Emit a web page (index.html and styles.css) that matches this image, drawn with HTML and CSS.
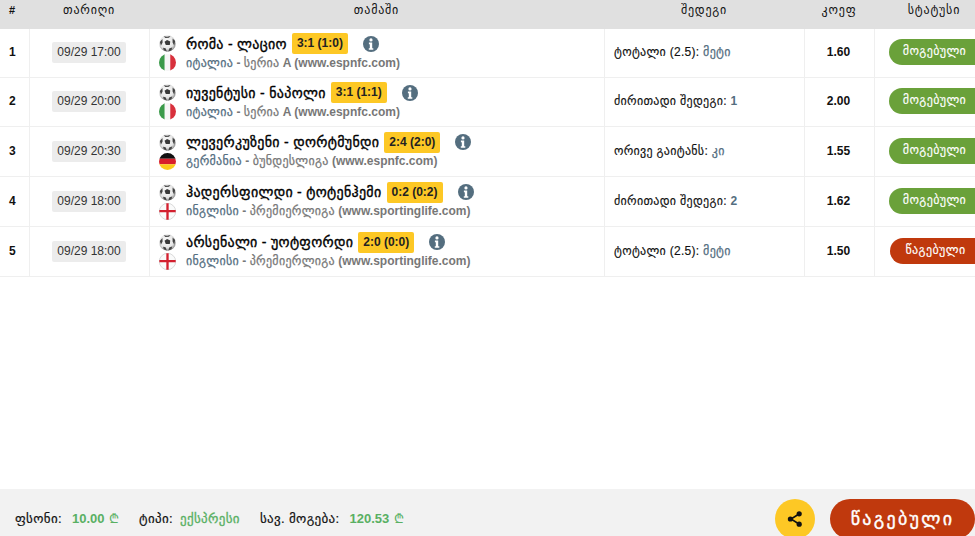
FILE: index.html
```html
<!DOCTYPE html>
<html lang="ka">
<head>
<meta charset="utf-8">
<title>კუპონი</title>
<link rel="stylesheet" href="styles.css">
</head>
<body>
<svg class="defs" width="0" height="0" aria-hidden="true">
  <defs>
    <radialGradient id="ball-shade" cx=".45" cy=".4" r=".6">
      <stop offset="0" stop-color="#fff"/><stop offset=".7" stop-color="#e4e4e4"/><stop offset="1" stop-color="#8c8c8c"/>
    </radialGradient>
    <symbol id="ball" viewBox="0 0 16 16">
      <circle cx="8" cy="8" r="7.8" fill="url(#ball-shade)"/>
      <path d="M7.6 4.6 10.6 6 10.2 9.4H6.4L5.2 6.4Z" fill="#3a3a3a"/>
      <path d="M4.4 1.2 7.6 1.6 10.8 1 9.4 2.6 6 2.8ZM.8 6.6 3.2 3.8 3.4 7 1.8 10.2ZM15.2 5.6 12.8 3.4 12.8 7 14.4 10.2ZM3.8 12 6.2 12.4 7.4 15.6 4.4 14.4ZM12.4 11.8 9.8 12.4 8.8 15.6 11.8 14.4Z" fill="#444"/>
    </symbol>
    <symbol id="flag-it" viewBox="0 0 16 16">
      <clipPath id="c-it"><circle cx="8" cy="8" r="8"/></clipPath>
      <g clip-path="url(#c-it)">
        <rect width="5.4" height="16" fill="#3b9a4a"/>
        <rect x="5.4" width="5.2" height="16" fill="#f6f6f6"/>
        <rect x="10.6" width="5.4" height="16" fill="#d8303c"/>
      </g>
    </symbol>
    <symbol id="flag-de" viewBox="0 0 16 16">
      <clipPath id="c-de"><circle cx="8" cy="8" r="8"/></clipPath>
      <g clip-path="url(#c-de)">
        <rect width="16" height="5.4" fill="#111"/>
        <rect y="5.4" width="16" height="5.2" fill="#d8202c"/>
        <rect y="10.6" width="16" height="5.4" fill="#fbcb1a"/>
      </g>
    </symbol>
    <symbol id="flag-en" viewBox="0 0 16 16">
      <circle cx="8" cy="8" r="7.7" fill="#fafafa" stroke="#bbb" stroke-width=".5"/>
      <path d="M6.9.3h2.2v6.3h6.6v2.2H9.1v6.9H6.9V8.8H.3V6.6h6.6Z" fill="#d3202f"/>
    </symbol>
    <symbol id="info" viewBox="0 0 16 16">
      <circle cx="8" cy="8" r="8" fill="#546e7f"/>
      <circle cx="8" cy="3.9" r="1.6" fill="#fff"/>
      <path d="M5.9 6.6h3.3v5.6h1.1v1.6H5.8v-1.6h1V8.2h-.9Z" fill="#fff"/>
    </symbol>
  </defs>
</svg>
<table class="bets">
  <colgroup>
    <col class="c-num"><col class="c-date"><col class="c-match"><col class="c-res"><col class="c-odd"><col class="c-status">
  </colgroup>
  <thead>
    <tr><th>#</th><th>თარიღი</th><th>თამაში</th><th>შედეგი</th><th>კოეფ</th><th>სტატუსი</th></tr>
  </thead>
  <tbody>
    <tr class="short">
      <td class="num">1</td>
      <td class="date"><span class="stamp">09/29 17:00</span></td>
      <td class="match">
        <div class="line"><svg class="ico"><use href="#ball"/></svg><span class="teams">რომა - ლაციო</span><span class="score">3:1 (1:0)</span><svg class="info"><use href="#info"/></svg></div>
        <div class="line"><svg class="ico"><use href="#flag-it"/></svg><span class="league"><span class="country">იტალია</span> - <span class="ka">სერია</span> A (www.espnfc.com)</span></div>
      </td>
      <td class="res">ტოტალი (2.5): <span class="pick">მეტი</span></td>
      <td class="odd">1.60</td>
      <td class="stat"><span class="pill won">მოგებული</span></td>
    </tr>
    <tr class="short">
      <td class="num">2</td>
      <td class="date"><span class="stamp">09/29 20:00</span></td>
      <td class="match">
        <div class="line"><svg class="ico"><use href="#ball"/></svg><span class="teams">იუვენტუსი - ნაპოლი</span><span class="score">3:1 (1:1)</span><svg class="info"><use href="#info"/></svg></div>
        <div class="line"><svg class="ico"><use href="#flag-it"/></svg><span class="league"><span class="country">იტალია</span> - <span class="ka">სერია</span> A (www.espnfc.com)</span></div>
      </td>
      <td class="res">ძირითადი შედეგი: <span class="pick num-pick">1</span></td>
      <td class="odd">2.00</td>
      <td class="stat"><span class="pill won">მოგებული</span></td>
    </tr>
    <tr>
      <td class="num">3</td>
      <td class="date"><span class="stamp">09/29 20:30</span></td>
      <td class="match">
        <div class="line"><svg class="ico"><use href="#ball"/></svg><span class="teams">ლევერკუზენი - დორტმუნდი</span><span class="score">2:4 (2:0)</span><svg class="info"><use href="#info"/></svg></div>
        <div class="line"><svg class="ico"><use href="#flag-de"/></svg><span class="league"><span class="country">გერმანია</span> - <span class="ka">ბუნდესლიგა</span> (www.espnfc.com)</span></div>
      </td>
      <td class="res">ორივე გაიტანს: <span class="pick">კი</span></td>
      <td class="odd">1.55</td>
      <td class="stat"><span class="pill won">მოგებული</span></td>
    </tr>
    <tr>
      <td class="num">4</td>
      <td class="date"><span class="stamp">09/29 18:00</span></td>
      <td class="match">
        <div class="line"><svg class="ico"><use href="#ball"/></svg><span class="teams">ჰადერსფილდი - ტოტენჰემი</span><span class="score">0:2 (0:2)</span><svg class="info"><use href="#info"/></svg></div>
        <div class="line"><svg class="ico"><use href="#flag-en"/></svg><span class="league"><span class="country">ინგლისი</span> - <span class="ka">პრემიერლიგა</span> (www.sportinglife.com)</span></div>
      </td>
      <td class="res">ძირითადი შედეგი: <span class="pick num-pick">2</span></td>
      <td class="odd">1.62</td>
      <td class="stat"><span class="pill won">მოგებული</span></td>
    </tr>
    <tr>
      <td class="num">5</td>
      <td class="date"><span class="stamp">09/29 18:00</span></td>
      <td class="match">
        <div class="line"><svg class="ico"><use href="#ball"/></svg><span class="teams">არსენალი - უოტფორდი</span><span class="score">2:0 (0:0)</span><svg class="info"><use href="#info"/></svg></div>
        <div class="line"><svg class="ico"><use href="#flag-en"/></svg><span class="league"><span class="country">ინგლისი</span> - <span class="ka">პრემიერლიგა</span> (www.sportinglife.com)</span></div>
      </td>
      <td class="res">ტოტალი (2.5): <span class="pick">მეტი</span></td>
      <td class="odd">1.50</td>
      <td class="stat"><span class="pill lost">წაგებული</span></td>
    </tr>
  </tbody>
</table>
<footer class="summary">
  <div class="facts">
    <span class="fact">ფსონი: <b class="val gap">10.00 <i class="lari">₾</i></b></span>
    <span class="fact">ტიპი: <span class="val word">ექსპრესი</span></span>
    <span class="fact">სავ. მოგება: <b class="val gap">120.53 <i class="lari">₾</i></b></span>
  </div>
  <button class="share" type="button" aria-label="share">
    <svg width="18" height="18" viewBox="0 0 18 18"><path d="M13 4 5 9l8 5" fill="none" stroke="#111" stroke-width="1.6"/><circle cx="13.2" cy="3.8" r="2.6" fill="#111"/><circle cx="4.4" cy="9" r="2.6" fill="#111"/><circle cx="13.2" cy="14.2" r="2.6" fill="#111"/></svg>
  </button>
  <div class="outcome">წაგებული</div>
</footer>
</body>
</html>
```
FILE: styles.css
```css
* { box-sizing: border-box; }
html, body { height: 100%; }
body {
  margin: 0;
  height: 536px;
  overflow: hidden;
  display: flex;
  flex-direction: column;
  font-family: "Liberation Sans", "DejaVu Sans", sans-serif;
  font-size: 12px;
  color: #111;
  background: #fff;
}
.defs { position: absolute; }
.bets {
  width: 975px;
  border-collapse: separate;
  border-spacing: 0;
  table-layout: fixed;
  flex: none;
}
.c-num { width: 30px; }
.c-date { width: 120px; }
.c-match { width: 455px; }
.c-res { width: 200px; }
.c-odd { width: 70px; }
.c-status { width: 100px; }
th {
  height: 29px;
  padding: 0 2px 9px 0;
  background: #e0e0e0;
  font-weight: 400;
  font-size: 12px;
  line-height: 20px;
  letter-spacing: .8px;
  text-align: center;
}
th:first-child { font-weight: 700; font-size: 11px; padding-right: 6px; letter-spacing: 0; }
th:last-child { padding: 0 0 9px 18px; }
td {
  height: 50px;
  padding: 0;
  border-bottom: 1px solid #efefef;
  border-right: 1px solid #efefef;
  vertical-align: middle;
}
tr.short td { height: 49px; }
td:last-child { border-right: 0; }
.num { font-weight: 700; padding: 0 0 2px 9px; }
.date { text-align: center; padding: 0 1px 1px 0; }
.stamp {
  display: inline-block;
  width: 74px;
  height: 21px;
  line-height: 20px;
  background: #ececec;
  border-radius: 2px;
  color: #333;
}
.match { padding: 0 0 1px 9px; }
.line { display: flex; align-items: center; height: 20px; }
.line + .line { height: 18px; }
.ico { width: 17px; height: 17px; flex: none; margin-right: 10px; }
.teams {
  font-size: 14px;
  font-weight: 400;
  letter-spacing: .3px;
  -webkit-text-stroke: .35px #000;
  color: #000;
  white-space: nowrap;
}
.score {
  margin-left: 5px;
  width: 56px;
  text-align: center;
  height: 21px;
  line-height: 20px;
  background: #fdc825;
  border-radius: 2px;
  font-weight: 700;
  color: #222;
}
.info { width: 16px; height: 16px; margin-left: 15px; }
.league { font-weight: 700; color: #777; white-space: nowrap; }
.ka { font-weight: 400; letter-spacing: .3px; -webkit-text-stroke: .25px #777; }
.country { color: #546e7f; font-weight: 400; letter-spacing: .3px; -webkit-text-stroke: .25px #546e7f; }
.res { padding: 0 0 2px 9px; letter-spacing: .3px; -webkit-text-stroke: .15px #111; }
.pick { color: #546e7f; -webkit-text-stroke: .25px #546e7f; }
.num-pick { font-weight: 700; -webkit-text-stroke: 0; }
.odd { text-align: center; font-weight: 700; padding: 0 2px 2px 0; }
.stat { padding: 0 0 2px 14px; overflow: hidden; }
.pill {
  display: block;
  width: 100px;
  height: 26px;
  line-height: 25px;
  border-radius: 13px 0 0 13px;
  color: #fff;
  letter-spacing: .4px;
  -webkit-text-stroke: .15px #fff;
  text-align: center;
  padding-right: 9px;
}
.won { background: #6aa13a; }
.lost { background: #c0390d; margin-left: 1px; }
.summary {
  margin-top: auto;
  height: 47px;
  flex: none;
  display: flex;
  align-items: flex-start;
  background: #f2f2f2;
  padding: 10px 0 0 15px;
  overflow: hidden;
}
.facts { display: flex; gap: 20px; padding-top: 12px; font-size: 13px; line-height: 16px; flex: 1; white-space: nowrap; }
.fact { letter-spacing: .35px; -webkit-text-stroke: .2px #111; }
.val { color: #59b063; font-weight: 700; margin-left: 3px; letter-spacing: 0; -webkit-text-stroke: 0; }
.word { font-weight: 400; letter-spacing: .35px; -webkit-text-stroke: .3px #59b063; }
.gap { margin-left: 6px; }
.lari { font-style: normal; font-weight: 400; font-family: "DejaVu Sans", sans-serif; margin-left: 1px; }
.share {
  width: 40px;
  height: 40px;
  border: 0;
  padding: 0;
  border-radius: 50%;
  background: #fdc825;
  display: flex;
  align-items: center;
  justify-content: center;
  flex: none;
}
.outcome {
  margin-left: 15px;
  width: 145px;
  height: 40px;
  border-radius: 20px;
  background: #c0390d;
  color: #fff;
  font-size: 18px;
  letter-spacing: 2.3px;
  -webkit-text-stroke: .4px #fff;
  line-height: 40px;
  text-align: center;
  flex: none;
}
```
